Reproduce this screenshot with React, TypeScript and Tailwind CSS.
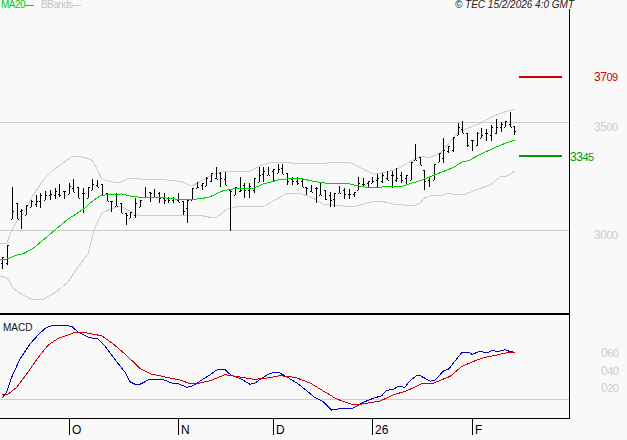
// Price chart with MA20 / Bollinger bands and a MACD panel underneath
type Pt = number[];

// traced at 3x: [x, y] pairs relative to the crop origin, back to page pixels here
const toPage = (ox: number, oy: number, list: Pt[]) => list.map(([x, y]) => [ox + x / 3, oy + y / 3]);
const pointsOf = (list: Pt[]) => list.map(([x, y]) => `${x.toFixed(1)},${y.toFixed(1)}`).join(" ");

const bar = (ox: number, oy: number, list: number[][]) =>
  list.map(([x, top, bottom]) => ({ x: Math.floor(ox + x / 3) + 0.5, top: oy + top / 3, bottom: oy + bottom / 3 }));

const bars = [
  ...bar(0, 150, [
    [7, 322, 358], [22, 285, 345], [37, 110, 208], [52, 160, 208], [64, 178, 236], [79, 165, 195], [93, 150, 172],
    [108, 135, 172], [122, 130, 175], [137, 122, 150], [151, 120, 150], [165, 115, 148], [179, 102, 142], [193, 124, 146],
    [208, 98, 132], [220, 88, 125], [234, 110, 145], [249, 115, 188], [264, 112, 145], [278, 88, 120], [292, 90, 112],
    [307, 102, 135], [322, 128, 152], [335, 152, 185], [349, 130, 168], [364, 160, 190], [379, 188, 224], [392, 185, 205],
    [406, 145, 205], [421, 150, 170], [436, 112, 140], [450, 125, 155], [464, 118, 140], [478, 125, 160], [492, 128, 162],
    [506, 142, 160], [520, 140, 158], [535, 130, 155], [550, 153, 195], [563, 150, 218], [578, 115, 150], [592, 95, 115],
    [607, 100, 120], [620, 80, 108],
  ]),
  ...bar(210, 130, [
    [5, 130, 155], [20, 110, 148], [32, 125, 170], [47, 125, 165], [62, 180, 302], [76, 172, 195], [90, 142, 185],
    [104, 158, 203], [118, 158, 203], [133, 145, 190], [147, 110, 155], [161, 112, 155], [176, 112, 135], [190, 118, 155],
    [204, 102, 128], [218, 102, 132], [232, 128, 165], [247, 140, 165], [261, 140, 165], [276, 145, 170], [290, 172, 195],
    [304, 165, 185], [318, 170, 218], [332, 155, 195], [346, 180, 210], [361, 185, 230], [374, 188, 230], [388, 168, 190],
    [404, 175, 208], [418, 178, 208], [432, 185, 200], [446, 142, 180], [460, 145, 170], [474, 152, 170], [488, 140, 158],
    [503, 132, 175], [518, 130, 158], [532, 122, 150], [546, 122, 175], [560, 115, 155], [575, 125, 160], [590, 135, 165],
    [603, 95, 150], [617, 42, 90],
  ]),
  ...bar(417, 60, [
    [10, 290, 315], [23, 330, 390], [37, 348, 380], [52, 313, 360], [66, 280, 305], [80, 235, 310], [94, 258, 280],
    [109, 230, 275], [124, 190, 225], [136, 183, 218], [151, 220, 262], [166, 240, 272], [181, 215, 258], [194, 205, 235],
    [208, 208, 242], [224, 195, 242], [238, 178, 222], [252, 185, 215], [266, 183, 200], [281, 155, 202], [291, 198, 225],
  ]),
];

const clamp = (v: number, a: number, b: number) => Math.min(b, Math.max(a, v));

const ma20 = [
  ...toPage(0, 150, [[0, 330], [20, 328], [50, 315], [70, 311], [100, 295], [130, 270], [165, 240], [200, 210], [250, 178], [275, 155], [300, 138], [320, 134], [365, 132], [390, 138], [420, 142], [490, 142], [505, 146], [545, 148], [570, 150], [590, 147], [610, 145], [630, 140]]),
  ...toPage(210, 130, [[40, 182], [75, 176], [130, 175], [160, 162], [205, 150], [235, 146], [275, 146], [310, 154], [350, 160], [410, 160], [440, 167], [470, 172], [500, 174], [520, 170], [580, 168], [610, 158], [630, 152]]),
  ...toPage(417, 60, [[40, 350], [110, 322], [135, 306], [155, 302], [190, 283], [240, 260], [265, 250], [293, 240]]),
];

const bandUp = [
  ...toPage(0, 150, [[0, 280], [20, 282], [35, 240], [50, 215], [70, 190], [100, 135], [130, 90], [160, 60], [185, 42], [218, 18], [250, 22], [275, 30], [290, 55], [305, 87], [330, 95], [360, 98], [385, 85], [420, 87], [500, 90], [545, 95], [575, 108], [600, 95], [630, 78]]),
  ...toPage(210, 130, [[40, 123], [120, 123], [145, 110], [180, 98], [225, 98], [300, 102], [330, 101], [380, 96], [420, 98], [450, 112], [490, 133], [520, 128], [560, 118], [600, 95], [630, 80]]),
  ...toPage(417, 60, [[40, 292], [70, 280], [100, 245], [125, 215], [150, 205], [190, 190], [225, 170], [265, 155], [293, 148]]),
];

const bandLow = [
  ...toPage(0, 150, [[0, 380], [20, 382], [40, 415], [60, 430], [100, 450], [130, 448], [170, 425], [205, 395], [235, 350], [265, 310], [280, 250], [290, 220], [305, 190], [330, 178], [360, 168], [385, 180], [410, 195], [500, 195], [570, 195], [600, 196], [630, 202]]),
  ...toPage(210, 130, [[20, 262], [50, 238], [80, 230], [120, 229], [165, 228], [195, 210], [230, 190], [270, 190], [310, 205], [340, 222], [400, 228], [440, 228], [490, 214], [510, 213], [550, 222], [610, 228], [630, 220]]),
  ...toPage(417, 60, [[20, 415], [40, 408], [70, 407], [95, 400], [120, 405], [145, 403], [170, 392], [220, 375], [250, 350], [270, 348], [293, 334]]),
];

const macd = [
  ...toPage(0, 310, [[5, 268], [20, 250], [35, 205], [60, 150], [90, 105], [120, 72], [140, 55], [165, 48], [185, 48], [215, 52], [235, 70], [265, 85], [295, 90], [315, 112], [340, 145], [375, 190], [390, 218], [405, 226], [420, 226], [445, 213], [485, 210], [515, 222], [535, 224], [560, 235], [580, 230], [610, 210], [630, 198]]),
  ...toPage(210, 310, [[20, 183], [45, 182], [65, 200], [90, 208], [120, 226], [135, 222], [155, 208], [180, 193], [205, 190], [230, 203], [265, 225], [290, 245], [315, 266], [340, 278], [365, 303], [400, 298], [430, 297], [460, 280], [490, 268], [515, 260], [530, 244], [550, 241], [565, 232], [585, 235], [600, 215], [620, 200]]),
  ...toPage(417, 310, [[10, 200], [40, 217], [55, 213], [80, 185], [95, 180], [135, 130], [155, 130], [165, 136], [190, 127], [210, 132], [225, 125], [245, 127], [265, 122], [280, 128], [293, 130]]),
];

const signal = [
  ...toPage(0, 310, [[5, 256], [25, 255], [50, 235], [80, 195], [115, 145], [145, 108], [175, 88], [205, 78], [225, 70], [250, 70], [280, 76], [305, 80], [340, 105], [375, 135], [420, 178], [450, 194], [500, 205], [540, 213], [565, 222], [600, 222], [630, 215]]),
  ...toPage(210, 310, [[45, 197], [90, 204], [130, 211], [160, 209], [210, 200], [255, 205], [300, 222], [350, 252], [380, 270], [425, 286], [450, 286], [510, 276], [550, 258], [590, 245], [620, 232]]),
  ...toPage(417, 310, [[15, 224], [45, 224], [100, 202], [135, 172], [175, 155], [200, 146], [240, 138], [270, 131], [293, 130]]),
];

const months = [
  { label: "O", w: "w-[109px]" },
  { label: "N", w: "w-[95px]" },
  { label: "D", w: "w-[99px]" },
  { label: "26", w: "w-[100px]" },
  { label: "F", w: "w-[60px]" },
];

function PriceBars() {
  return (
    <g fill="#000" shapeRendering="crispEdges">
      {bars.map((b, i) => {
        const next = bars[i + 1] ?? b;
        const prev = bars[i - 1] ?? b;
        const close = clamp((next.top + next.bottom) / 2, b.top, b.bottom);
        const open = clamp((prev.top + prev.bottom) / 2, b.top, b.bottom);
        return (
          <g key={i}>
            <rect x={b.x - 0.5} y={b.top} width="1" height={b.bottom - b.top} />
            <rect x={b.x - 1.5} y={Math.round(open)} width="1" height="1" />
            <rect x={b.x + 0.5} y={Math.round(close)} width="1" height="1" />
          </g>
        );
      })}
    </g>
  );
}

const AxisLabel = ({ big, small, className }: { big: string; small: string; className: string }) => (
  <span className={`absolute text-[12px] leading-none tracking-[-0.4px] ${className}`}>
    {big}
    <span className="text-[11px] tracking-[-0.7px]">{small}</span>
  </span>
);

export default function App() {
  return (
    <div className="flex h-[440px] w-[627px] flex-col overflow-hidden bg-[#f9f9f9] font-['Liberation_Sans',Arial,sans-serif]">
      <div className="flex h-[9px] items-start justify-between pr-[53px] pl-px text-[10px] leading-[10px]">
        <div className="flex">
          <span className="flex w-[40px] items-center text-[#00cc00]">
            <span className="w-[24px] tracking-[-0.5px]">MA20</span>
            <span className="h-px w-[9px] bg-[#00cc00]" />
          </span>
          <span className="flex items-center text-[#c4c4c4]">
            <span className="w-[31px] tracking-[-0.6px]">BBands</span>
            <span className="h-px w-[9px] bg-[#cccccc]" />
          </span>
        </div>
        <span className="italic text-[#222222]">© TEC 15/2/2026 4:0 GMT</span>
      </div>

      <div className="relative flex">
        <div className="w-[570px] border-r border-black">
          <div className="h-[306px] border-b-2 border-black">
            <svg className="block" width="569" height="304" viewBox="0 9 569 304">
              <g stroke="#cccccc" shapeRendering="crispEdges">
                <line x1="0" x2="569" y1="122.5" y2="122.5" />
                <line x1="0" x2="569" y1="230.5" y2="230.5" />
              </g>
              <g fill="none" stroke="#cccccc" shapeRendering="crispEdges">
                <polyline points={pointsOf(bandUp)} />
                <polyline points={pointsOf(bandLow)} />
              </g>
              <PriceBars />
              <polyline points={pointsOf(ma20)} fill="none" stroke="#00cc00" shapeRendering="crispEdges" />
              <rect x="519" y="76" width="43" height="2" fill="#cc0000" />
              <rect x="519" y="155" width="43" height="2" fill="#009900" />
            </svg>
          </div>
          <div className="h-[104px] border-b border-black">
            <svg className="block" width="569" height="103" viewBox="0 316 569 103">
              <line x1="0" x2="569" y1="400.5" y2="400.5" stroke="#cccccc" shapeRendering="crispEdges" />
              <polyline points={pointsOf(macd)} fill="none" stroke="#0000cc" shapeRendering="crispEdges" />
              <polyline points={pointsOf(signal)} fill="none" stroke="#cc0000" shapeRendering="crispEdges" />
            </svg>
          </div>
        </div>
        <span className="absolute top-[314px] left-[3px] text-[10px] leading-none text-[#111111]">MACD</span>
        <div className="relative flex-1">
          <AxisLabel big="37" small="09" className="top-[62px] left-[24px] text-[#cc0000]" />
          <AxisLabel big="35" small="00" className="top-[112px] left-[24px] text-[#cccccc]" />
          <AxisLabel big="33" small="45" className="top-[142px] left-0 text-[#009900]" />
          <AxisLabel big="30" small="00" className="top-[220px] left-[24px] text-[#cccccc]" />
          <AxisLabel big="0" small="60" className="top-[338px] left-[31px] text-[#cccccc]" />
          <AxisLabel big="0" small="40" className="top-[356px] left-[31px] text-[#cccccc]" />
          <AxisLabel big="0" small="20" className="top-[373px] left-[31px] text-[#cccccc]" />
        </div>
      </div>

      <div className="flex pl-[69px]">
        {months.map((m) => (
          <div key={m.label} className={`flex h-[16px] border-l border-black ${m.w}`}>
            <span className="mt-[3px] pl-[2px] text-[12px] leading-[16px] text-black">{m.label}</span>
          </div>
        ))}
      </div>
    </div>
  );
}
